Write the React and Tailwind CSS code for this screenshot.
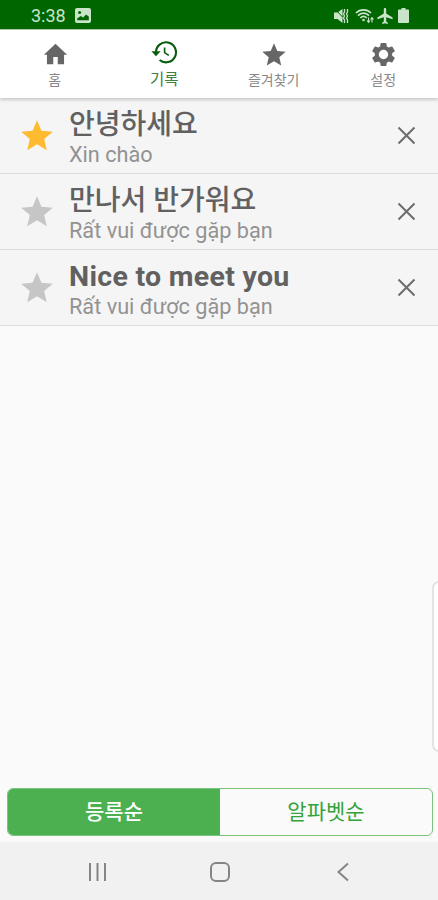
import { useState } from 'react';
import { clsx } from 'clsx';

const STAR_PATH = 'M12 17.27 18.18 21l-1.64-7.03L22 9.24l-7.19-.61L12 2 9.19 8.63 2 9.24l5.46 4.73L5.82 21z';

const phrases = [
  { id: 1, text: '안녕하세요', translation: 'Xin chào', starred: true },
  { id: 2, text: '만나서 반가워요', translation: 'Rất vui được gặp bạn', starred: false },
  { id: 3, text: 'Nice to meet you', translation: 'Rất vui được gặp bạn', starred: false, latin: true },
];

const HomeIcon = () => (
  <svg className="w-[27px] h-[27px] ml-px" viewBox="0 0 24 24" fill="currentColor">
    <path d="M10 20.6v-6.4h4v6.4h5.6v-8.4h2.7L12 2.4 1.7 12.2h2.7v8.4z" />
  </svg>
);

const HistoryIcon = () => (
  <svg className="w-[28px] h-[27px] ml-px" viewBox="0 0 28 27" fill="none" stroke="currentColor">
    <path d="M5 14.6A10 10 0 1 1 8.6 22" strokeWidth="2.1" />
    <path d="M.4 13.2h9.2L5 18.2z" fill="currentColor" stroke="none" />
    <path d="M13.6 9.6v5l4.2 2.8" strokeWidth="1.6" />
  </svg>
);

const StarIcon = ({ className }) => (
  <svg className={className} viewBox="0 0 24 24" fill="currentColor">
    <path d={STAR_PATH} />
  </svg>
);

const SettingsIcon = () => (
  <svg className="w-[29px] h-[29px]" viewBox="0 0 24 24" fill="currentColor">
    <path d="M19.14 12.94c.04-.3.06-.61.06-.94 0-.32-.02-.64-.07-.94l2.03-1.58a.49.49 0 0 0 .12-.61l-1.92-3.32a.488.488 0 0 0-.59-.22l-2.39.96c-.5-.38-1.03-.7-1.62-.94l-.36-2.54a.484.484 0 0 0-.48-.41h-3.84c-.24 0-.43.17-.47.41l-.36 2.54c-.59.24-1.13.57-1.62.94l-2.39-.96c-.22-.08-.47 0-.59.22L2.74 8.87c-.12.21-.08.47.12.61l2.03 1.58c-.05.3-.09.63-.09.94s.02.64.07.94l-2.03 1.58a.49.49 0 0 0-.12.61l1.92 3.32c.12.22.37.29.59.22l2.39-.96c.5.38 1.03.7 1.62.94l.36 2.54c.05.24.24.41.48.41h3.84c.24 0 .44-.17.47-.41l.36-2.54c.59-.24 1.13-.56 1.62-.94l2.39.96c.22.08.47 0 .59-.22l1.92-3.32c.12-.22.07-.47-.12-.61zM12 15.9a3.9 3.9 0 1 1 0-7.8 3.9 3.9 0 0 1 0 7.8z" />
  </svg>
);

const StatusBar = () => (
  <div className="h-[29px] shrink-0 bg-[#006600] text-[#c9e4c9] flex items-center justify-between pl-[31px] pr-[29px] pt-[2px]">
    <div className="flex items-center gap-[9px]">
      <span className="font-['Roboto',sans-serif] text-[18px] leading-none">3:38</span>
      <svg className="w-[16px] h-[15px]" viewBox="0 0 16 15">
        <rect width="16" height="15" rx="2" fill="currentColor" />
        <path d="M2.2 12.2v-1.6L5.6 8l2.6 1.6L11 6.400l2.800 2.200v3.600z" fill="#006600" />
        <circle cx="4.600" cy="4.600" r="1.500" fill="#006600" />
      </svg>
    </div>
    <div className="flex items-center">
      <svg className="w-[17px] h-[16px] mr-[5px]" viewBox="0 0 17 16" fill="none" stroke="currentColor">
        <path d="M1 4.500h3.500L9.500 1v14l-5-4H1z" fill="currentColor" stroke="none" />
        <path d="M2.500 1.500 9.500 9" stroke="#006600" strokeWidth="1" />
        <path d="M11.500 1v3l-1 1.800 1 2.200-1 2.200 1 1.800v3M14.500 1v3l-1 1.800 1 2.200-1 2.200 1 1.800v3" strokeWidth="1.300" />
      </svg>
      <svg className="w-[20px] h-[16px] mr-[2px]" viewBox="0 0 20 16" fill="none" stroke="currentColor">
        <path d="M1 5C5 .8 12 .8 16 5M3 7.600c3.200-3.300 8-3.300 11 0M5.300 10c2-2 4.500-2 6.500 0" strokeWidth="1.700" />
        <circle cx="8.500" cy="12" r="1.300" fill="currentColor" stroke="none" />
        <path d="M13.500 9.500V14m-1.500-1.500 1.500 1.800 1.500-1.800M17 14.500V10m-1.500 1.500L17 9.700l1.500 1.800" strokeWidth="1.100" />
      </svg>
      <svg className="w-[16px] h-[16px] mr-[5px]" viewBox="2 2 19 20" fill="currentColor">
        <path d="M21 16v-2l-8-5V3.500c0-.83-.67-1.500-1.500-1.500S10 2.670 10 3.500V9l-8 5v2l8-2.500V19l-2 1.500V22l3.500-1 3.500 1v-1.500L13 19v-5.500z" />
      </svg>
      <svg className="w-[11px] h-[15px]" viewBox="0 0 11 15" fill="currentColor">
        <path d="M3.500 0h4v1.500H10q1 0 1 1V14q0 1-1 1H1q-1 0-1-1V2.500q0-1 1-1h2.500z" />
      </svg>
    </div>
  </div>
);

const tabs = [
  { id: 'home', label: '홈', icon: <HomeIcon /> },
  { id: 'history', label: '기록', icon: <HistoryIcon /> },
  { id: 'favorites', label: '즐겨찾기', icon: <StarIcon className="w-[28px] h-[28px]" /> },
  { id: 'settings', label: '설정', icon: <SettingsIcon /> },
];

const TabBar = ({ active, onSelect }) => (
  <nav className="relative z-10 h-[69px] shrink-0 bg-white border-t border-[#a9cba9] grid grid-cols-4 shadow-[0_2px_3px_rgba(0,0,0,0.18)]">
    {tabs.map((tab) => (
      <button
        key={tab.id}
        onClick={() => onSelect(tab.id)}
        className={clsx(
          'flex flex-col items-center',
          tab.id === active ? 'text-[#085c0c] pt-[7px]' : 'text-[#666666] pt-[10px]'
        )}
      >
        <span className="h-[29px] flex items-center">{tab.icon}</span>
        <span
          className={clsx(
            'whitespace-nowrap',
            tab.id === active
              ? 'text-[15.5px] leading-[28px] text-[#3c813f]'
              : 'text-[14px] leading-[23px] text-[#888888]'
          )}
        >
          {tab.label}
        </span>
      </button>
    ))}
  </nav>
);

const PhraseRow = ({ phrase, onToggle, onRemove }) => (
  <li className="h-[76px] flex items-center bg-[#f5f5f5] border-b border-[#dedede] pl-[18px] pr-[20px]">
    <button onClick={onToggle} className={phrase.starred ? 'text-[#ffbb2f]' : 'text-[#c6c6c6]'}>
      <StarIcon className="w-[38px] h-[38px]" />
    </button>
    <div className="flex-1 ml-[13px] pt-[6px]">
      <p
        className={clsx(
          'leading-[32px] text-[#616161] whitespace-nowrap',
          phrase.latin ? 'text-[28.5px] font-bold tracking-[0.3px]' : 'text-[28px] font-medium'
        )}
      >
        {phrase.text}
      </p>
      <p className="text-[21.7px] leading-[27px] text-[#929292] whitespace-nowrap">{phrase.translation}</p>
    </div>
    <button onClick={onRemove} className="text-[#6c6c6c]">
      <svg className="w-[23px] h-[23px]" viewBox="0 0 23 23" fill="none" stroke="currentColor" strokeWidth="2">
        <path d="m3.500 3.500 16 16m0-16-16 16" />
      </svg>
    </button>
  </li>
);

const NavigationBar = () => (
  <div className="h-[58px] shrink-0 bg-[#f1f1f1] grid grid-cols-[1fr_22px_1fr] items-center pl-[87px] pr-[87px] pt-[2px]">
    <svg className="w-[20px] h-[20px]" viewBox="0 0 20 20" fill="none" stroke="#858585" strokeWidth="2">
      <path d="M3 1v18M10.500 1v18M18 1v18" />
    </svg>
    <svg className="w-[22px] h-[22px] ml-px" viewBox="0 0 22 22" fill="none" stroke="#858585" strokeWidth="2">
      <rect x="2" y="2" width="18" height="18" rx="5" />
    </svg>
    <svg className="w-[14px] h-[20px] justify-self-end" viewBox="0 0 14 20" fill="none" stroke="#858585" strokeWidth="2">
      <path d="M11 1.500 1.500 10l9.500 8.500" />
    </svg>
  </div>
);

const App = () => {
  const [tab, setTab] = useState('history');
  const [items, setItems] = useState(phrases);
  const [sort, setSort] = useState('added');

  const toggleStar = (id) => {
    setItems(items.map((item) => (item.id === id ? { ...item, starred: !item.starred } : item)));
  };

  const removeItem = (id) => {
    setItems(items.filter((item) => item.id !== id));
  };

  const sorted = sort === 'added' ? items : [...items].sort((a, b) => a.text.localeCompare(b.text));

  return (
    <div className="relative w-full h-screen flex flex-col overflow-hidden bg-[#fafafa] font-['Roboto','Noto_Sans_CJK_KR',sans-serif]">
      <StatusBar />
      <TabBar active={tab} onSelect={setTab} />

      <ul className="flex-1">
        {sorted.map((phrase) => (
          <PhraseRow
            key={phrase.id}
            phrase={phrase}
            onToggle={() => toggleStar(phrase.id)}
            onRemove={() => removeItem(phrase.id)}
          />
        ))}
      </ul>

      {/* Edge panel handle */}
      <div className="absolute top-[581px] -right-[8px] w-[14px] h-[171px] rounded-[7px] border-2 border-[#e3e3e3] bg-white"></div>

      {/* Sort order */}
      <div className="h-[48px] shrink-0 ml-[7px] mr-[5px] mb-[6px] flex rounded-[6px] border border-[#7cc47e] overflow-hidden text-[21px]">
        <button
          onClick={() => setSort('added')}
          className={clsx('flex-1 pt-[2px]', sort === 'added' ? 'bg-[#4caf50] text-white font-medium' : 'text-[#35a33a]')}
        >
          등록순
        </button>
        <button
          onClick={() => setSort('alphabet')}
          className={clsx('flex-1 pt-[2px]', sort === 'alphabet' ? 'bg-[#4caf50] text-white font-medium' : 'text-[#35a33a]')}
        >
          알파벳순
        </button>
      </div>

      <NavigationBar />
    </div>
  );
};

export default App;
